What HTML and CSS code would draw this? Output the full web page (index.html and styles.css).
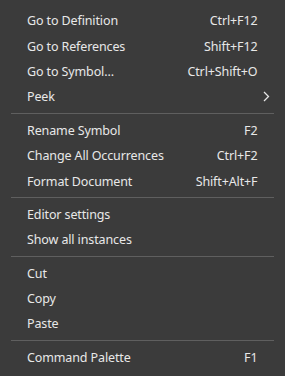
FILE: index.html
```html
<!DOCTYPE html>
<html lang="en">
<head>
  <meta charset="UTF-8">
  <meta name="viewport" content="width=device-width, initial-scale=1.0">
  <title>Context menu</title>
  <link rel="stylesheet" href="styles.css">
</head>
<body>
  <div class="menu">
    <div class="item"><span class="label">Go to Definition</span><span class="keys">Ctrl+F12</span></div>
    <div class="item"><span class="label">Go to References</span><span class="keys">Shift+F12</span></div>
    <div class="item"><span class="label">Go to Symbol...</span><span class="keys">Ctrl+Shift+O</span></div>
    <div class="item"><span class="label">Peek</span>
      <svg class="chevron" width="7" height="11" viewBox="0 0 7 11"><path d="M1 1l4.5 4.5L1 10" fill="none" stroke="#e6e6e6" stroke-width="1.3"/></svg>
    </div>
    <div class="sep"></div>
    <div class="item"><span class="label">Rename Symbol</span><span class="keys">F2</span></div>
    <div class="item"><span class="label">Change All Occurrences</span><span class="keys">Ctrl+F2</span></div>
    <div class="item"><span class="label">Format Document</span><span class="keys">Shift+Alt+F</span></div>
    <div class="sep"></div>
    <div class="item"><span class="label">Editor settings</span></div>
    <div class="item"><span class="label">Show all instances</span></div>
    <div class="sep"></div>
    <div class="item"><span class="label">Cut</span></div>
    <div class="item"><span class="label">Copy</span></div>
    <div class="item"><span class="label">Paste</span></div>
    <div class="sep"></div>
    <div class="item"><span class="label">Command Palette</span><span class="keys">F1</span></div>
  </div>
</body>
</html>
```

FILE: styles.css
```css
:root {
  --bg: #3b3b3b;
  --fg: #e8e8e8;
  --sep: #5f5f5f;
}
* { box-sizing: border-box; }
html, body {
  margin: 0;
  height: 100%;
  background: var(--bg);
}
body {
  font-family: "Noto Sans", "Open Sans", sans-serif;
  font-size: 12.5px;
  letter-spacing: -0.12px;
  color: var(--fg);
}
.menu {
  padding: 8px 0;
}
.item {
  display: flex;
  align-items: center;
  justify-content: space-between;
  height: 25.4px;
  padding: 0 27.5px 0 27px;
  white-space: nowrap;
}
.keys { margin-left: 20px; }
.chevron { margin-right: -12px; }
.sep {
  height: 1px;
  margin: 3.5px 11px;
  background: var(--sep);
}
```
